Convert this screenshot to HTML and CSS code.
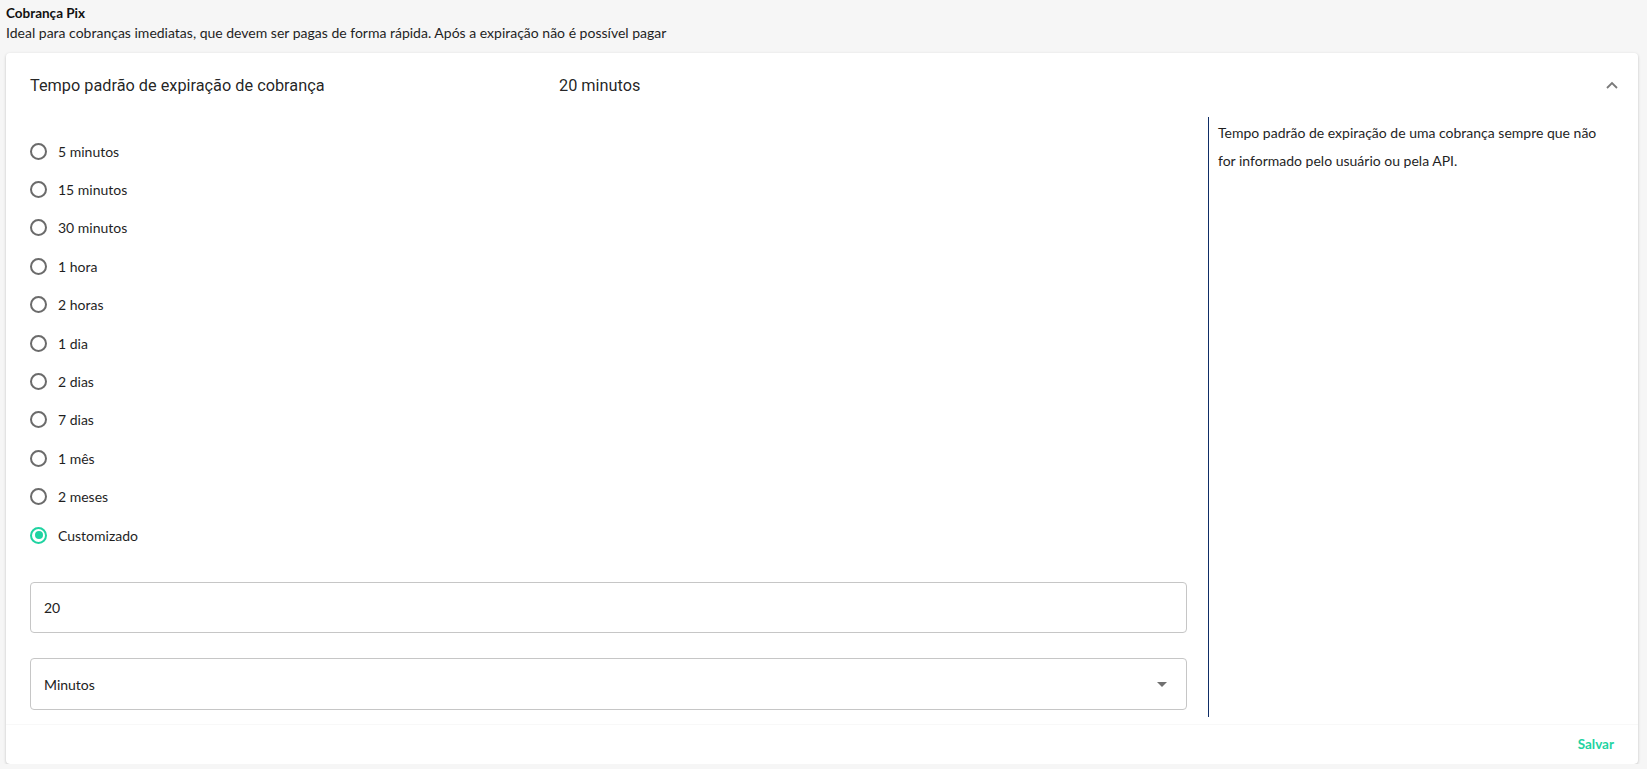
FILE: index.html
```html
<!DOCTYPE html>
<html lang="pt-BR">

<head>
    <meta charset="UTF-8">
    <meta name="viewport" content="width=device-width, initial-scale=1.0">
    <title>Cobrança Pix</title>
    <link rel="stylesheet" href="styles.css">
</head>

<body>
    <div class="page-head">
        <h1>Cobrança Pix</h1>
        <p>Ideal para cobranças imediatas, que devem ser pagas de forma rápida. Após a expiração não é possível pagar</p>
    </div>

    <div class="card">
        <div class="summary">
            <span class="summary-title">Tempo padrão de expiração de cobrança</span>
            <span class="summary-value">20 minutos</span>
            <svg class="chevron" width="12" height="8" viewBox="0 0 12 8">
                <path d="M1 7 L6 2 L11 7" fill="none" stroke="#7a7a7a" stroke-width="1.8" />
            </svg>
        </div>

        <div class="details">
            <div class="options">
                <form onsubmit="return false">
                    <label class="radio-row"><span class="radio"></span>5 minutos</label>
                    <label class="radio-row"><span class="radio"></span>15 minutos</label>
                    <label class="radio-row"><span class="radio"></span>30 minutos</label>
                    <label class="radio-row"><span class="radio"></span>1 hora</label>
                    <label class="radio-row"><span class="radio"></span>2 horas</label>
                    <label class="radio-row"><span class="radio"></span>1 dia</label>
                    <label class="radio-row"><span class="radio"></span>2 dias</label>
                    <label class="radio-row"><span class="radio"></span>7 dias</label>
                    <label class="radio-row"><span class="radio"></span>1 mês</label>
                    <label class="radio-row"><span class="radio"></span>2 meses</label>
                    <label class="radio-row"><span class="radio checked"></span>Customizado</label>

                    <div class="field field-input">20</div>
                    <div class="field field-select">
                        <span>Minutos</span>
                        <span class="caret"></span>
                    </div>
                </form>
            </div>
            <div class="help">
                Tempo padrão de expiração de uma cobrança sempre que não for informado pelo usuário ou pela API.
            </div>
        </div>

        <div class="footer">
            <button class="save">Salvar</button>
        </div>
    </div>
</body>

</html>
```

FILE: styles.css
```css
body {
    margin: 0;
    background-color: #f6f6f6;
    font-family: Lato, "Noto Sans", sans-serif;
    color: #1f1f1f;
}

.page-head {
    padding: 4px 6px 0;
}

.page-head h1 {
    margin: 0;
    font-size: 13.5px;
    line-height: 19px;
    font-weight: 700;
    color: #111;
}

.page-head p {
    margin: 0;
    font-size: 14px;
    line-height: 19px;
}

.card {
    margin: 11px 9px 0 6px;
    background-color: #fff;
    border-radius: 4px;
    box-shadow: 0 1px 3px rgba(0, 0, 0, 0.22);
}

.summary {
    display: flex;
    align-items: center;
    height: 64px;
    padding: 0 20px 0 24px;
    font-family: Roboto, "Liberation Sans", sans-serif;
    font-size: 16.3px;
    color: rgba(0, 0, 0, 0.87);
}

.summary-title {
    width: 529px;
}

.chevron {
    margin-left: auto;
}

.details {
    display: flex;
    padding: 0 24px 7px;
}

.options {
    width: 1157px;
    padding: 15px 0 7px;
}

.radio-row {
    display: flex;
    align-items: center;
    height: 38.4px;
    font-size: 14px;
}

.radio {
    box-sizing: border-box;
    width: 17px;
    height: 17px;
    margin: 0 11px 0 0;
    border: 2px solid #6b6b6b;
    border-radius: 50%;
}

.radio.checked {
    border-color: #1fd3a1;
    position: relative;
}

.radio.checked::after {
    content: "";
    position: absolute;
    top: 2.5px;
    left: 2.5px;
    width: 8px;
    height: 8px;
    border-radius: 50%;
    background-color: #1fd3a1;
}

.field {
    box-sizing: border-box;
    display: flex;
    align-items: center;
    height: 51px;
    padding: 0 13px;
    border: 1px solid #c6c6c6;
    border-radius: 4px;
    font-size: 14px;
    color: #222;
}

.field-input {
    margin-top: 28px;
}

.field-select {
    margin-top: 25px;
    height: 52px;
    justify-content: space-between;
}

.caret {
    width: 0;
    height: 0;
    margin-right: 6px;
    border-left: 5px solid transparent;
    border-right: 5px solid transparent;
    border-top: 5px solid #707070;
}

.help {
    flex: 1;
    margin-left: 21px;
    padding: 2px 0 0 9px;
    border-left: 1px solid #0f2d66;
    font-size: 14px;
    line-height: 28px;
}

.footer {
    display: flex;
    justify-content: flex-end;
    height: 39px;
    padding: 0 24px;
    border-top: 1px solid #f8f8f8;
}

.save {
    border: none;
    background: none;
    padding: 0 0 2px;
    font-family: Lato, sans-serif;
    font-weight: 700;
    font-size: 13.5px;
    color: #1fd3a1;
    cursor: pointer;
}
```
